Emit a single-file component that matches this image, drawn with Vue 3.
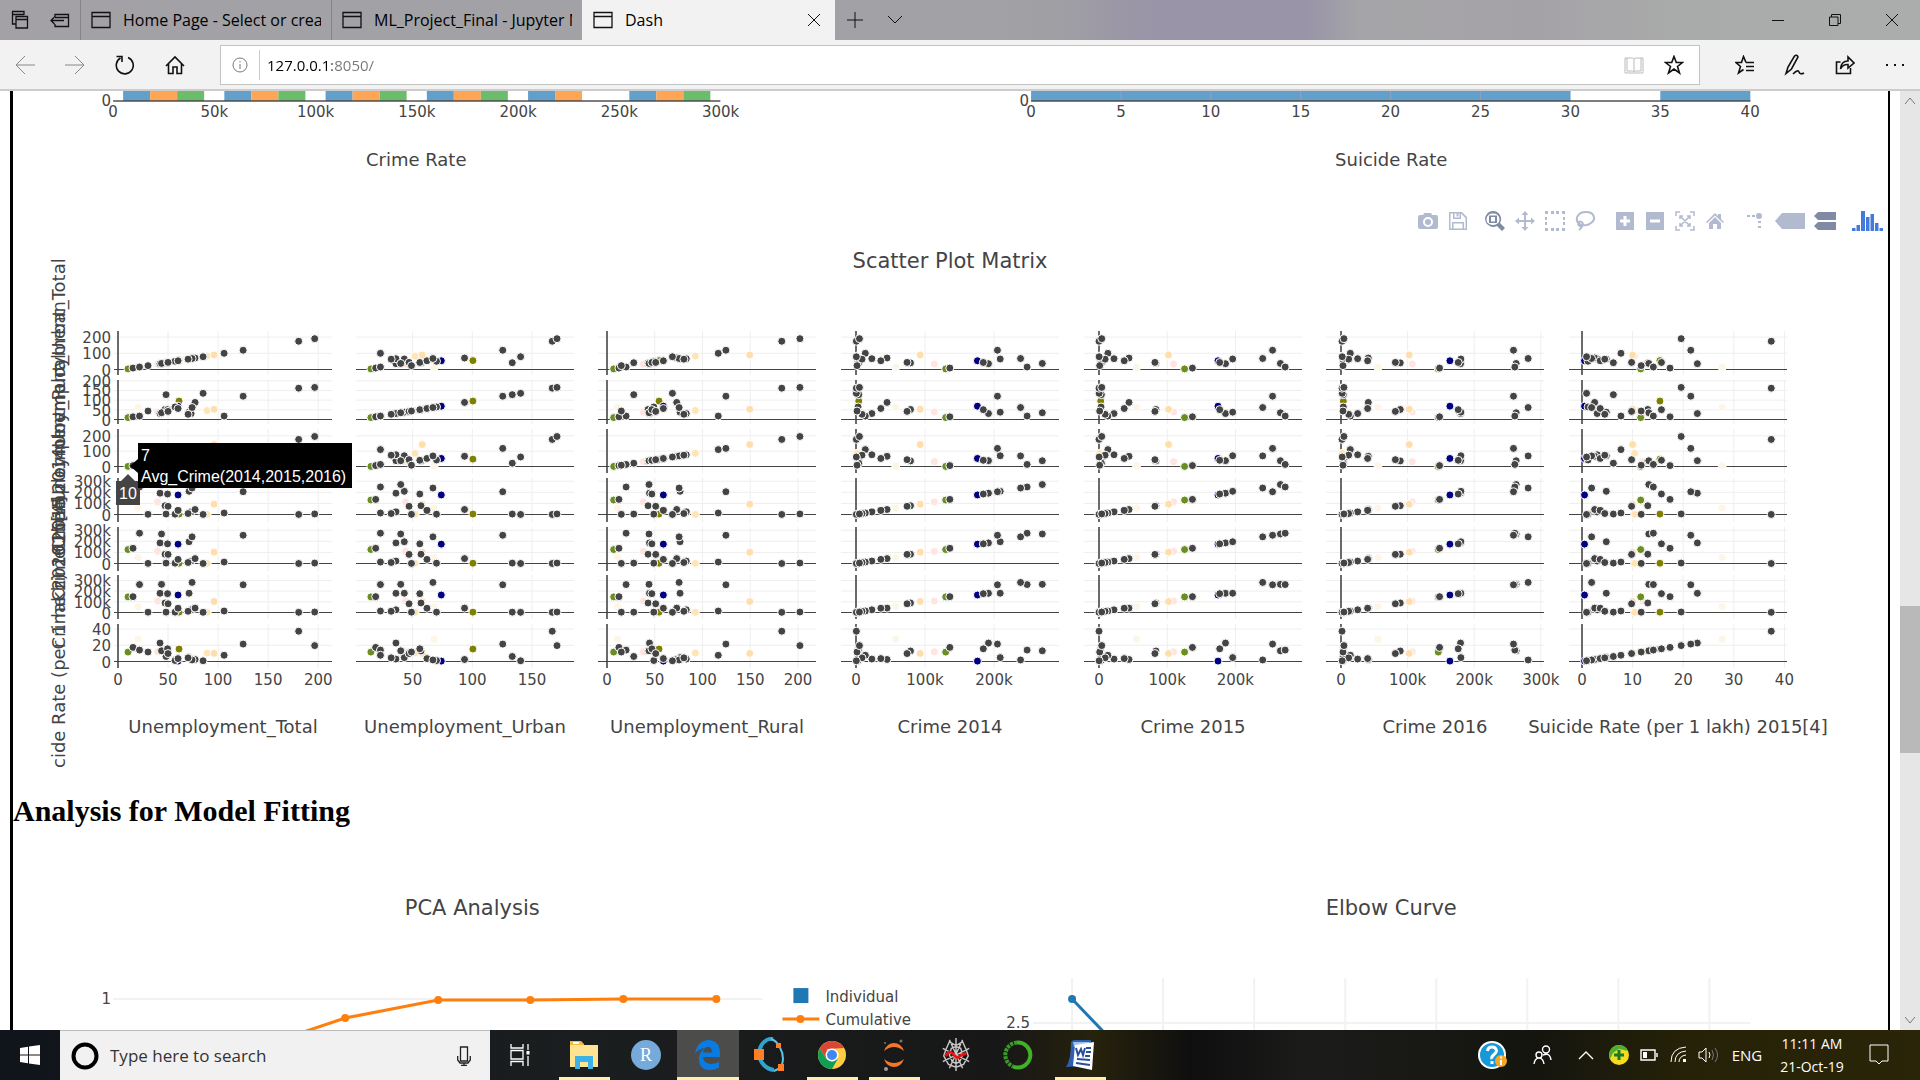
<script setup>
import { ref } from 'vue'

const url = ref('127.0.0.1:8050/')
const query = ref('')

const tabs = [
  { title: 'Home Page - Select or create a notebook', active: false },
  { title: 'ML_Project_Final - Jupyter Notebook', active: false },
  { title: 'Dash', active: true },
]

/* Histogram of the crime rate: one group per 50k */
const crimeTicks = ['0', '50k', '100k', '150k', '200k', '250k', '300k']
const crimeBars = []
for (let g = 0; g < 6; g++) {
  const colours = ['blue', 'orange', 'green']
  colours.forEach((c, k) => {
    if (g === 4 && c === 'green') return
    crimeBars.push({ x: 123 + g * 101.2 + k * 27, c })
  })
}
const suicideTicks = [0, 5, 10, 15, 20, 25, 30, 35, 40]
const suicideBars = [0, 5, 10, 15, 20, 25, 35]
const sx = (v) => 1031 + v * 17.97

/* Scatter plot matrix */
const cols = [
  { name: 'Unemployment_Total', left: 114, zero: 118, k: 1.001, ticks: [0, 50, 100, 150, 200], axis: true },
  { name: 'Unemployment_Urban', left: 356, zero: 353, k: 1.193, ticks: [50, 100, 150], axis: false },
  { name: 'Unemployment_Rural', left: 598, zero: 607, k: 0.955, ticks: [0, 50, 100, 150, 200], axis: true },
  { name: 'Crime 2014', left: 841, zero: 856, k: 0.69, ticks: [0, 100, 200], axis: true, unit: 'k' },
  { name: 'Crime 2015', left: 1084, zero: 1099, k: 0.682, ticks: [0, 100, 200], axis: true, unit: 'k' },
  { name: 'Crime 2016', left: 1326, zero: 1341, k: 0.666, ticks: [0, 100, 200, 300], axis: true, unit: 'k' },
  { name: 'Suicide Rate (per 1 lakh) 2015[4]', left: 1569, zero: 1582, k: 5.06, ticks: [0, 10, 20, 30, 40], axis: true },
]
const rows = [
  { top: 331, zero: 369.5, k: 0.162, ticks: [0, 100, 200], shift: 1 },
  { top: 380, zero: 419.5, k: 0.1935, ticks: [0, 50, 100, 150, 200], shift: 1 },
  { top: 429, zero: 466.5, k: 0.1535, ticks: [0, 100, 200], shift: 1 },
  { top: 478, zero: 514.5, k: 0.111, ticks: [0, 100, 200, 300], shift: 0, unit: 'k' },
  { top: 527, zero: 563.5, k: 0.111, ticks: [0, 100, 200, 300], shift: 0, unit: 'k' },
  { top: 575, zero: 612.5, k: 0.107, ticks: [0, 100, 200, 300], shift: 0, unit: 'k' },
  { top: 624, zero: 661.5, k: 0.81, ticks: [0, 20, 40], shift: 0 },
]
const panelW = 218
const panelH = 44

/* total, urban, rural, crime 14 / 15 / 16 (thousands), suicide rate, colour */
const states = [
  [20, 68, 11, 57.5, 55, 55.5, 27.7, '#fdf5e6'],
  [39.5, 44, 38, 113.5, 109.5, 107, 12, '#ffe4e1'],
  [61, 100.5, 54.5, 4, 2.5, 3.5, 15.4, '#808000'],
  [60, 74, 59, 176, 174.5, 163.5, 0.5, '#000080'],
  [89, 52, 92.5, 1.5, 1, 2, 10.4, '#ffe4b5'],
  [96, 58, 149.5, 93, 102, 102.5, 10, '#ffdead'],
  [10, 15, 7, 130, 125.5, 146, 11.6, '#6b8e23'],
  [57, 70, 49, 3, 3, 3.5, 1.2, '#444'],
  [42, 36, 44.5, 192, 185.5, 179.5, 22.8, '#444'],
  [47, 57, 43, 79, 83.5, 89, 13, '#444'],
  [71, 43, 76.5, 209, 196, 180, 4.8, '#444'],
  [73, 36, 83, 23, 22, 25, 3, '#444'],
  [77, 93.5, 73, 45, 44, 41, 2.5, '#444'],
  [48, 133.5, 28, 4, 3.5, 3.5, 6.2, '#444'],
  [43.5, 40, 44, 270, 266, 263, 13.2, '#444'],
  [15, 19, 12.5, 136, 137, 148, 17.4, '#444'],
  [21.5, 23, 20, 248, 273, 261, 14.1, '#444'],
  [49.5, 56, 47, 184.5, 177, 176, 15.7, '#444'],
  [50, 47, 51, 74, 82, 81.6, 9.8, '#444'],
  [60, 62, 59, 36, 37, 40, 3.6, '#444'],
  [74, 67, 75.5, 238.5, 240, 281, 1.9, '#444'],
  [106, 23, 116.5, 13.5, 13, 14, 7.7, '#444'],
  [70, 32, 80.5, 8.7, 9, 11.5, 4.5, '#444'],
  [85, 140.5, 68.5, 0.5, 0.2, 1.8, 0.9, '#444'],
  [30, 49, 15, 1.5, 1, 3, 11.7, '#444'],
  [125, 125.5, 124.5, 205, 254.5, 259, 21.5, '#444'],
  [180.5, 167, 183, 0.5, 0, 1.5, 37.4, '#444'],
  [196.5, 171, 202, 5, 4, 4.4, 19.6, '#444'],
]
const label = (v, unit) => (v && unit ? v + unit : String(v))

const pca = '252,1049 345,1018 438,1000 530,1000 623,999 716,999'
const pcaPoints = [[345, 1018], [438, 1000], [530, 1000], [623, 999], [716, 999]]
const elbowGrid = [1072, 1163, 1254, 1345, 1436, 1527, 1618, 1709]
</script>

<template>
  <div class="screen">
    <header class="tabstrip">
      <button class="strip-btn" aria-label="Tabs you've set aside">
        <svg class="heavy" width="20" height="20" viewBox="0 0 20 20"><path d="M6 14H2.500V1.500H14V5M2.500 4.500H14" /><path d="M6 6.500H17.500V18H6ZM6 9.500H17.500" /></svg>
      </button>
      <button class="strip-btn" aria-label="Set these tabs aside">
        <svg class="heavy" width="20" height="20" viewBox="0 0 20 20"><path d="M5 7V4.500H18.500V16.500H5V14M5 7.500H18.500M14 10.500H1M4.500 7L1 10.500L4.500 14" /></svg>
      </button>
      <div v-for="t in tabs" :key="t.title" class="tab" :class="{ active: t.active }">
        <svg class="heavy" width="20" height="18" viewBox="0 0 20 18"><path d="M1 1.500H19V16.500H1ZM1 5.500H19" /></svg>
        <span class="tab-title">{{ t.title }}</span>
        <button v-if="t.active" class="tab-close" aria-label="Close tab">
          <svg width="14" height="14" viewBox="0 0 14 14"><path d="M1 1L13 13M13 1L1 13" /></svg>
        </button>
      </div>
      <button class="strip-btn" aria-label="New tab">
        <svg width="16" height="16" viewBox="0 0 16 16"><path d="M8 0V16M0 8H16" /></svg>
      </button>
      <button class="strip-btn" aria-label="Show tab previews">
        <svg width="16" height="10" viewBox="0 0 16 10"><path d="M1 1L8 8L15 1" /></svg>
      </button>
      <div class="window-controls">
        <button aria-label="Minimize"><svg width="12" height="12" viewBox="0 0 12 12"><path d="M0 6.500H12" /></svg></button>
        <button aria-label="Restore"><svg width="12" height="12" viewBox="0 0 12 12"><path d="M.5 3H9V11.500H.5ZM2.500 3V.5H11.500V9.500H9" /></svg></button>
        <button aria-label="Close"><svg width="12" height="12" viewBox="0 0 12 12"><path d="M0 0L12 12M12 0L0 12" /></svg></button>
      </div>
    </header>

    <nav class="addressbar">
      <button class="nav-btn faint" aria-label="Back"><svg width="22" height="20" viewBox="0 0 22 20"><path d="M21 10H2M11 1L2 10L11 19" /></svg></button>
      <button class="nav-btn faint" aria-label="Forward"><svg width="22" height="20" viewBox="0 0 22 20"><path d="M1 10H20M11 1L20 10L11 19" /></svg></button>
      <button class="nav-btn" aria-label="Refresh"><svg width="20" height="20" viewBox="0 0 20 20"><path class="bold" d="M13 2.500A8.500 8.500 0 1 1 5.500 3M1.500 1.500H7V7" /></svg></button>
      <button class="nav-btn" aria-label="Home"><svg width="20" height="20" viewBox="0 0 20 20"><path class="bold" d="M1 11L10 2L19 11M3.500 9V18.500H8V12H12V18.500H16.500V9" /></svg></button>
      <div class="urlbox">
        <button class="info" aria-label="Site information">
          <svg width="16" height="16" viewBox="0 0 16 16"><circle cx="8" cy="8" r="7" /><path d="M8 7V12M8 4V5.500" /></svg>
        </button>
        <input v-model="url" class="url" type="text" aria-label="Address" />
        <button class="url-btn book" aria-label="Reading view"><svg width="20" height="18" viewBox="0 0 20 18"><path d="M1 2H3V15H8.500L10 16L11.500 15H17V2H19V17H1ZM3 2H8.500L10 3L11.500 2H17M10 3V16" /></svg></button>
        <button class="url-btn" aria-label="Add to favorites"><svg width="20" height="20" viewBox="0 0 20 20"><path class="bold" d="M10 1.500L12.300 7.500H18.500L13.500 11.500L15.500 18L10 14L4.500 18L6.500 11.500L1.500 7.500H7.700Z" /></svg></button>
      </div>
      <div class="nav-actions">
        <button class="nav-btn" aria-label="Favorites"><svg width="20" height="20" viewBox="0 0 20 20"><path class="bold" d="M11 7.500L8.500 1.500L6.500 7.500H1L5.500 11.500L3.500 18L8.500 14.500M11 7.500H19M11 11.500H19M11 15.500H19" /></svg></button>
        <button class="nav-btn" aria-label="Notes"><svg width="22" height="22" viewBox="0 0 22 22"><path class="bold" d="M2 19.500L4 13L10.500 2Q13 0 14 3L7.500 15L2 19.500ZM9 20Q14 15 15 18T20 19" /></svg></button>
        <button class="nav-btn" aria-label="Share"><svg width="20" height="20" viewBox="0 0 20 20"><path class="bold" d="M5.500 7H1.500V18.500H15.500V13M5.500 14Q6 6 13 6V2L19 8L13 13V9.500Q8 9 5.500 14Z" /></svg></button>
        <button class="nav-btn" aria-label="Settings and more"><svg width="20" height="4" viewBox="0 0 20 4"><path class="solid" d="M1 1H3V3H1ZM9 1H11V3H9ZM17 1H19V3H17Z" /></svg></button>
      </div>
    </nav>

    <div class="viewport">
      <main class="page">
        <section class="pair top">
          <svg viewBox="13 91 937 115" role="img" aria-label="Crime rate histogram">
            <rect v-for="b in crimeBars" :key="b.x" :x="b.x" y="80" width="27" height="21" :class="b.c" />
            <path class="axis" d="M113 101H720" />
            <text x="111" y="106" text-anchor="end">0</text>
            <text v-for="(t, i) in crimeTicks" :key="t" :x="113 + i * 101.2" y="117" text-anchor="middle">{{ t }}</text>
            <text class="name" x="416" y="166" text-anchor="middle">Crime Rate</text>
          </svg>
          <svg viewBox="951 91 937 115" role="img" aria-label="Suicide rate histogram">
            <rect v-for="b in suicideBars" :key="b" :x="sx(b)" y="80" width="90" height="21" class="blue" />
            <path v-for="b in [5, 10, 15, 20, 25]" :key="b" class="seam" :d="`M${sx(b)} 80V101`" />
            <path class="axis" d="M1031 101H1750" />
            <text x="1029" y="106" text-anchor="end">0</text>
            <text v-for="t in suicideTicks" :key="t" :x="sx(t)" y="117" text-anchor="middle">{{ t }}</text>
            <text class="name" x="1391" y="166" text-anchor="middle">Suicide Rate</text>
          </svg>
        </section>

        <section class="matrix">
          <div class="modebar">
            <div class="group">
              <button aria-label="Download plot as a png"><svg width="20" height="18" viewBox="0 0 20 18"><path fill-rule="evenodd" d="M2 3H5L6 1H13L14 3H18Q20 3 20 5V15Q20 17 18 17H2Q0 17 0 15V5Q0 3 2 3ZM10 5A4.900 4.900 0 1 0 10 15A4.900 4.900 0 1 0 10 5ZM10 7A3 3 0 1 1 10 13A3 3 0 1 1 10 7Z" /></svg></button>
              <button aria-label="Save and edit plot"><svg width="18" height="18" viewBox="0 0 18 18"><path fill-rule="evenodd" d="M0 0H13L18 5V18H0ZM1.500 1.500V16.500H3V10H15V16.500H16.500V6L12 1.500V7H4V1.500ZM5.500 1.500V5.500H10.500V1.500ZM7.500 1.500H9.500V4.500H7.500ZM4.500 11.500V16.500H13.500V11.500Z" /></svg></button>
            </div>
            <div class="group">
              <button class="on" aria-label="Zoom"><svg width="20" height="20" viewBox="0 0 20 20"><path fill-rule="evenodd" d="M8 0A8 8 0 1 0 12 15L17 20L20 17L15 12A8 8 0 0 0 8 0ZM8 2.500A5.800 5.800 0 1 1 8 14A5.800 5.800 0 1 1 8 2.500ZM4 4.500H12V12H4ZM6 6V10.500H10V6Z" /></svg></button>
              <button aria-label="Pan"><svg width="20" height="20" viewBox="0 0 20 20"><path d="M10 0L13.500 4H11V9H16V6.500L20 10L16 13.500V11H11V16H13.500L10 20L6.500 16H9V11H4V13.500L0 10L4 6.500V9H9V4H6.500Z" /></svg></button>
              <button aria-label="Box select"><svg width="20" height="20" viewBox="0 0 20 20"><path d="M0 0H3V3H0ZM6 0H9V3H6ZM11 0H14V3H11ZM17 0H20V3H17ZM0 6H2V9H0ZM18 6H20V9H18ZM0 11H2V14H0ZM18 11H20V14H18ZM0 17H3V20H0ZM6 17H9V20H6ZM11 17H14V20H11ZM17 17H20V20H17Z" /></svg></button>
              <button aria-label="Lasso select"><svg width="20" height="20" viewBox="0 0 20 20"><path class="stroke" d="M5 13.500C-1 9 2 1 11 1C20 1 21 9 16 12C13 14.500 8 15 5 13.500M3 12.500A2.500 2.500 0 1 1 7.500 14.500Q7 17 4 19M3 12.500Q3.500 15.500 7 15" /></svg></button>
            </div>
            <div class="group">
              <button aria-label="Zoom in"><svg width="18" height="18" viewBox="0 0 18 18"><path fill-rule="evenodd" d="M0 0H18V18H0ZM7.500 4V7.500H4V10.500H7.500V14H10.500V10.500H14V7.500H10.500V4Z" /></svg></button>
              <button aria-label="Zoom out"><svg width="18" height="18" viewBox="0 0 18 18"><path fill-rule="evenodd" d="M0 0H18V18H0ZM4 7.500V10.500H14V7.500Z" /></svg></button>
              <button aria-label="Autoscale"><svg class="thin" width="20" height="20" viewBox="0 0 20 20"><path class="stroke" d="M5 1H1V5M15 1H19V5M1 15V19H5M19 15V19H15M6 6L14 14M14 6L6 14M5 8V5H8M12 5H15V8M5 12V15H8M12 15H15V12" /></svg></button>
              <button aria-label="Reset axes"><svg width="18" height="16" viewBox="0 0 18 16"><path d="M9 0L12 3V1H15V6L18 9L17 10L9 2.500L1 10L0 9ZM9 4L15 10V16H11V11H7V16H3V10Z" /></svg></button>
            </div>
            <div class="group">
              <button aria-label="Toggle spike lines"><svg width="16" height="18" viewBox="0 0 16 18"><path d="M0 3H3V5H0ZM5 3H8V5H5ZM12 1A3 3 0 1 0 12 7A3 3 0 1 0 12 1ZM11 9H14V11H11ZM11 14H14V16H11Z" /></svg></button>
              <button class="wide" aria-label="Show closest data on hover"><svg width="30" height="16" viewBox="0 0 30 16"><path d="M0 8L7 0H30V16H7Z" /></svg></button>
              <button class="on" aria-label="Compare data on hover"><svg width="22" height="18" viewBox="0 0 22 18"><path d="M0 4L4 0H22V8H4ZM0 14L4 10H22V18H4Z" /></svg></button>
            </div>
            <a class="plotly" href="#" aria-label="Produced with Plotly"><svg width="32" height="20" viewBox="0 0 32 20"><path d="M0 17H3.500V20H0ZM4.500 14H8V20H4.500ZM9 0H13V20H9ZM14 6H17.500V20H14ZM18.500 3H22V20H18.500ZM23 12H26.500V20H23ZM27.500 17H31V20H27.500Z" /></svg></a>
          </div>
          <svg viewBox="13 236 1875 532" role="img" aria-label="Scatter plot matrix">
            <text class="title" x="950" y="268" text-anchor="middle">Scatter Plot Matrix</text>
            <g v-for="(c, i) in cols" :key="c.name">
              <g v-for="(r, j) in rows" :key="j">
                <path v-for="t in c.ticks" :key="'x' + t" class="grid" :d="`M${c.zero + t * c.k} ${r.top}v${panelH}`" />
                <path v-for="t in r.ticks" :key="'y' + t" class="grid" :d="`M${c.left} ${r.zero - t * r.k}h${panelW}`" />
                <path v-if="c.axis" class="zero-x" :d="`M${c.zero} ${r.top}v${panelH}`" />
                <path class="zero-y" :d="`M${c.left} ${r.zero}h${panelW}`" />
              </g>
              <text v-for="t in c.ticks" :key="t" :x="c.zero + t * c.k" y="685" text-anchor="middle">{{ label(t, c.unit) }}</text>
              <text class="name" :x="c.left + 109" y="733" text-anchor="middle">{{ c.name }}</text>
              <text class="name" :transform="`translate(65 ${rows[i].top + 22}) rotate(-90)`" text-anchor="middle">{{ c.name }}</text>
            </g>
            <g v-for="(r, j) in rows" :key="'l' + j">
              <text v-for="t in r.ticks" :key="t" x="111" :y="r.zero - t * r.k + 6" text-anchor="end">{{ label(t, r.unit) }}</text>
            </g>
            <g v-for="(c, i) in cols" :key="'p' + i">
              <g v-for="(r, j) in rows" :key="j">
                <circle v-for="(s, n) in states" :key="n" class="dot" r="4" :cx="c.zero + s[i] * c.k" :cy="r.zero - s[j] * r.k + r.shift" :fill="s[7]" />
              </g>
            </g>
            <path class="tip-x" d="M128 474L135 481H140V505H116V481H121Z" />
            <text class="tip" x="128" y="499" text-anchor="middle">10</text>
            <path class="tip-box" d="M130 466L138 459V443H352V488H138V473Z" />
            <text class="tip" x="141" y="461">7</text>
            <text class="tip" x="141" y="482">Avg_Crime(2014,2015,2016)</text>
          </svg>
        </section>

        <h2>Analysis for Model Fitting</h2>

        <section class="pair">
          <svg viewBox="13 852 937 198" role="img" aria-label="PCA analysis">
            <text class="title" x="472" y="915" text-anchor="middle">PCA Analysis</text>
            <path class="grid" d="M113 999H762" />
            <text x="111" y="1004" text-anchor="end">1</text>
            <polyline class="line cumulative" :points="pca" />
            <circle v-for="p in pcaPoints" :key="p[0]" :cx="p[0]" :cy="p[1]" r="4" fill="#ff7f0e" />
            <rect x="793" y="988" width="15" height="15" fill="#1f77b4" />
            <text x="825" y="1002">Individual</text>
            <path class="line cumulative" d="M782 1019H819" />
            <circle cx="800" cy="1019" r="4" fill="#ff7f0e" />
            <text x="825" y="1025">Cumulative</text>
          </svg>
          <svg viewBox="951 852 937 198" role="img" aria-label="Elbow curve">
            <text class="title" x="1391" y="915" text-anchor="middle">Elbow Curve</text>
            <path v-for="x in elbowGrid" :key="x" class="grid" :d="`M${x} 978V1050`" />
            <path class="grid" d="M1033 1023H1750" />
            <text x="1030" y="1028" text-anchor="end">2.5</text>
            <path class="line inertia" d="M1072 999L1121 1050" />
            <circle cx="1072" cy="999" r="4" fill="#1f77b4" />
          </svg>
        </section>
      </main>
      <div class="scrollbar">
        <button aria-label="Scroll up"><svg width="10" height="8" viewBox="0 0 10 8"><path d="M0 7L5 1L10 7" /></svg></button>
        <div class="track"><div class="before"></div><div class="thumb"></div><div class="after"></div></div>
        <button aria-label="Scroll down"><svg width="10" height="8" viewBox="0 0 10 8"><path d="M0 1L5 7L10 1" /></svg></button>
      </div>
    </div>

    <footer class="taskbar">
      <button class="start" aria-label="Start"><svg width="20" height="20" viewBox="0 0 20 20"><path fill="#fff" d="M0 3L8 1.800V9.500H0ZM9 1.600L20 0V9.500H9ZM0 10.500H8V18.200L0 17ZM9 10.500H20V20L9 18.400Z" /></svg></button>
      <div class="search">
        <svg width="28" height="28" viewBox="0 0 28 28"><circle cx="14" cy="14" r="11.500" fill="none" stroke="#000" stroke-width="4" /></svg>
        <input v-model="query" type="text" placeholder="Type here to search" aria-label="Type here to search" />
        <button aria-label="Speak"><svg width="14" height="20" viewBox="0 0 14 20"><path fill="none" stroke="#222" stroke-width="1.300" d="M3.500 1H10.500V15H3.500ZM.7 10V14L3 17H11L13.300 14V10M7 17V19M4 19.300H10" /></svg></button>
      </div>
      <div class="apps">
        <button aria-label="Task View"><svg width="20" height="24" viewBox="0 0 20 24"><path fill="none" stroke="#fff" stroke-width="1.300" d="M1 1V5H13V1M1 23V18.500H13V23M1 7.500H13V16H1ZM18 1V7M18 13V23" /><path fill="#fff" d="M16.500 8H19.500V11.500H16.500Z" /></svg></button>
        <button class="open" aria-label="File Explorer"><svg width="28" height="28" viewBox="0 0 28 28"><path fill="#f4bb3a" d="M0 0H11L14 3V7H0Z" /><path fill="#fff" d="M3 1H9V3H3Z" /><path fill="#ffe391" d="M0 4H28V26H0Z" /><path fill="#3db2e8" d="M5 15H23V28H18V21H10V28H5Z" /></svg></button>
        <button aria-label="R"><svg width="30" height="36" viewBox="0 0 30 36"><circle cx="15" cy="18" r="15" fill="#75aadb" /><text x="15" y="24" text-anchor="middle" font-size="18" fill="#fff" font-family="Liberation Serif, serif">R</text></svg></button>
        <button class="open current" aria-label="Microsoft Edge"><svg width="26" height="30" viewBox="0 0 26 30"><path fill="#0a7be0" d="M0 14Q2 1 13 0Q25 0 25 14V17H8Q9 24 16 24Q20 24 24 22V27.500Q20 30 15 30Q4 30 4 19Q4 12 10 8Q3 9 0 14ZM8 12.500H17Q17 7 13 7Q9 7 8 12.500Z" /></svg></button>
        <button aria-label="Octave"><svg width="32" height="36" viewBox="0 0 32 36"><path fill="none" stroke="#2fa4cf" stroke-width="4" d="M20 33C11 32 5 24 5 16C6 6 13 1 19 2" /><path fill="none" stroke="#5fc4e4" stroke-width="2" d="M17 2C24 4 29 14 29 22Q29 31 20 34" /><path fill="#ff7f27" d="M0 12H10V23H0ZM22 6H27V11H22ZM24 27H30V34H24Z" /></svg></button>
        <button class="open" aria-label="Google Chrome"><svg width="28" height="28" viewBox="0 0 28 28"><circle cx="14" cy="14" r="14" fill="#fc4" /><path fill="#0f9d58" d="M1.900 7A14 14 0 0 0 14 28L20 17.500L14 20.500L8 17.500Z" /><path fill="#db4437" d="M1.900 7L8 17.500L9 8L26.100 7A14 14 0 0 0 1.900 7Z" /><circle cx="14" cy="14" r="6.500" fill="#fff" /><circle cx="14" cy="14" r="5" fill="#4285f4" /></svg></button>
        <button class="open" aria-label="Jupyter"><svg width="24" height="32" viewBox="0 0 24 32"><path fill="#f37726" d="M2 12Q5 4 12 4T22 12Q12 4 2 12ZM2 20Q5 28 12 28T22 20Q12 28 2 20Z" /><circle cx="4" cy="30" r="2" fill="#9e9e9e" /><circle cx="19" cy="2" r="1.500" fill="#767677" /><circle cx="3" cy="4" r="1" fill="#767677" /></svg></button>
        <button aria-label="Spyder"><svg width="30" height="34" viewBox="0 0 30 36"><path fill="none" stroke="#c8c8c8" stroke-width="1.500" d="M8 4L15 8L22 4L26 13L28 19L23 28L15 31L7 28L2 19L4 13ZM10 11L15 9L20 11L22 18L19 25L15 27L11 25L8 18ZM15 0V35M1 11L29 25M29 11L1 25M8 2L22 32M22 2L8 32" /><path fill="none" stroke="#e11" stroke-width="3" d="M4 19Q8 12 12 17T18 20T26 16" /></svg></button>
        <button aria-label="Anaconda"><svg width="30" height="30" viewBox="0 0 30 30"><path fill="none" stroke="#43b02a" stroke-width="4" d="M14 2.500A12.500 12.500 0 1 1 10 26.500" /><path fill="none" stroke="#3a9a2a" stroke-width="4" stroke-dasharray="3 1" d="M14 2.500A12.500 12.500 0 0 0 10 26.500" /></svg></button>
        <button class="open" aria-label="Microsoft Word"><svg width="28" height="30" viewBox="0 0 28 30"><path fill="#2d5fb0" d="M5 2Q6 0 9 0H25V6L20 26L0 27Q5 20 5 2Z" /><path fill="#9fc3ee" d="M7 2H23V5L8 7Z" /><path fill="#fff" d="M9 5L28 2L26 30L7 26Z" /><path fill="none" stroke="#2a4f9c" stroke-width="2" d="M10 8L12 15L15 9L17 15L19 8M20 8H25M20 12H25M19 16H24M11 19L24 20M10 23L24 25" /></svg></button>
      </div>
      <div class="tray">
        <button class="w50" aria-label="Help"><svg width="30" height="28" viewBox="0 0 30 28"><circle cx="14" cy="14" r="14" fill="#fff" /><circle cx="14" cy="14" r="12" fill="#1798d8" /><path fill="none" stroke="#fff" stroke-width="3" d="M9.500 10Q10 6 14 6T18.500 10Q18 12 15.500 14T14 18M14 20V23" /><circle cx="23" cy="20" r="6" fill="#f5a623" /><path stroke="#fff" stroke-width="2" d="M23 19V24M23 15.500V17.500" /></svg></button>
        <button class="w50" aria-label="People"><svg width="20" height="20" viewBox="0 0 20 20"><path class="w strong" d="M13 1A3.500 3.500 0 1 1 13 8A3.500 3.500 0 1 1 13 1ZM6 7A3 3 0 1 1 6 13A3 3 0 1 1 6 7ZM1 19Q2 13 6 13T11 19M10 10Q17 7 18 15" /></svg></button>
        <button class="w36" aria-label="Show hidden icons"><svg width="16" height="10" viewBox="0 0 16 10"><path class="w strong" d="M1 9L8 2L15 9" /></svg></button>
        <button class="w30" aria-label="Antivirus"><svg width="20" height="20" viewBox="0 0 20 20"><circle cx="10" cy="10" r="10" fill="#f5dc1c" /><path fill="#4fae32" d="M10 0A10 10 0 0 1 19 6L10 4L4 8L1 14A10 10 0 0 1 10 0Z" /><path stroke="#157a2c" stroke-width="3" d="M10 5V15M5 10H15" /></svg></button>
        <button class="w30" aria-label="Battery"><svg width="18" height="12" viewBox="0 0 18 12"><path class="w strong" d="M1 1H15V11H1ZM17 4V8" /><path fill="#fff" d="M3 3H7V9H3Z" /></svg></button>
        <button class="w30" aria-label="Network"><svg width="18" height="18" viewBox="0 0 18 18"><path class="w" d="M1 16Q1 2 16 1M5 16Q5 6 16 5M9 16Q9 10 16 9" /><path fill="#fff" d="M13 13H16V16H13Z" /></svg></button>
        <button class="w30" aria-label="Volume"><svg width="22" height="16" viewBox="0 0 22 16"><path class="w" d="M1 5H4L8 1V15L4 11H1ZM11 5Q13 8 11 11" /><path class="w dim" d="M14 3Q17 8 14 13M17 1Q22 8 17 15" /></svg></button>
        <button class="lang">ENG</button>
        <button class="clock"><span>11:11 AM</span><span>21-Oct-19</span></button>
        <button class="notice" aria-label="Notifications"><svg width="20" height="22" viewBox="0 0 20 22"><path class="w" d="M1 1H19V17H13L10 20L7 17H1Z" /></svg></button>
      </div>
    </footer>
  </div>
</template>

<style>
html,
body {
  margin: 0;
  background: #fff;
}
</style>

<style scoped>
.screen {
  display: flex;
  flex-direction: column;
  height: 100vh;
  overflow: hidden;
  font-family: "Open Sans", sans-serif;
  color: #000;
}
button {
  display: flex;
  align-items: center;
  justify-content: center;
  margin: 0;
  padding: 0;
  border: 0;
  background: none;
  color: inherit;
  font: inherit;
}
svg {
  display: block;
  flex: none;
}

/* tab strip */
.tabstrip {
  display: flex;
  flex: none;
  height: 40px;
  background: linear-gradient(to right, #a3a1a6 0%, #a2a1a6 52%, #a09fa4 55%, #9994a7 60%, #9994a7 68%, #a5a5a8 71%, #a5a2a7 80%, #a9aaaa 87%, #abadac 100%);
}
.tabstrip svg path {
  fill: none;
  stroke: #111;
}
.tabstrip .heavy path {
  stroke-width: 1.3;
}
.strip-btn {
  width: 40px;
}
.tab {
  display: flex;
  align-items: center;
  gap: 12px;
  box-sizing: border-box;
  width: 251px;
  padding: 0 10px;
  border-left: 1px solid #85838a;
  font-size: 16px;
  white-space: nowrap;
}
.tab.active {
  width: 253px;
  border-color: #f2f2f2;
  background: #f2f2f2;
}
.tab-title {
  flex: 1;
  overflow: hidden;
}
.tab-close {
  width: 22px;
}
.window-controls {
  display: flex;
  margin-left: auto;
}
.window-controls button {
  width: 57px;
}

/* address bar */
.addressbar {
  display: flex;
  align-items: center;
  flex: none;
  box-sizing: border-box;
  height: 51px;
  border-bottom: 2px solid #ccc;
  background: #f2f2f2;
}
.addressbar svg path,
.addressbar svg circle {
  fill: none;
  stroke: #111;
  stroke-width: 1;
}
.addressbar svg path.bold {
  stroke-width: 1.6;
}
.addressbar svg path.solid {
  fill: #111;
  stroke: none;
}
.nav-btn {
  width: 50px;
  height: 40px;
}
.addressbar .faint svg path {
  stroke: #888;
}
.urlbox {
  display: flex;
  align-items: center;
  flex: 1;
  box-sizing: border-box;
  height: 40px;
  margin-left: 20px;
  border: 1px solid #c4c4c4;
  background: #fff;
}
.info {
  width: 39px;
  height: 30px;
  border-right: 1px solid #ccc;
}
.addressbar .info svg path,
.addressbar .info svg circle {
  stroke: #777;
}
.url {
  flex: 1;
  min-width: 0;
  padding: 0 0 0 7px;
  border: 0;
  outline: 0;
  background: linear-gradient(to right, #000 72px, #777 72px);
  -webkit-background-clip: text;
  background-clip: text;
  -webkit-text-fill-color: transparent;
  font: 15px "Open Sans", sans-serif;
}
.url-btn {
  width: 40px;
}
.url-btn:last-child {
  margin-right: 5px;
}
.addressbar .book svg path {
  stroke: #bbb;
}
.nav-actions {
  display: flex;
  margin-left: 20px;
}

/* web page */
.viewport {
  display: flex;
  flex: 1;
  min-height: 0;
}
.page {
  flex: 1;
  min-width: 0;
  margin: 0 10px;
  overflow: hidden;
  border-left: 3px solid #000;
  border-right: 2px solid #000;
}
.page text {
  font-family: "DejaVu Sans", sans-serif;
  font-size: 15px;
  fill: #444;
}
.page text.name {
  font-size: 18px;
}
.page text.title {
  font-size: 21px;
}
.page text.tip {
  font-family: "Liberation Sans", sans-serif;
  font-size: 16px;
  fill: #fff;
}
.pair {
  display: grid;
  grid-template-columns: 1fr 1fr;
}
.pair svg,
.matrix > svg {
  width: 100%;
  height: auto;
}
.blue {
  fill: #62a0cb;
}
.orange {
  fill: #ffa556;
}
.green {
  fill: #6bbc6b;
}
.axis {
  stroke: #444;
  stroke-opacity: 0.7;
  stroke-width: 2px;
}
.seam {
  stroke: #8f9fbe;
}
.grid {
  stroke: #eee;
  stroke-width: 1px;
}
.pair .grid {
  stroke-width: 2px;
  stroke: #f2f2f2;
}
.zero-x {
  stroke: #6a6a6a;
  stroke-width: 2px;
}
.zero-y {
  stroke: #444;
}
.dot {
  stroke: #fff;
}
.line {
  fill: none;
  stroke-width: 3px;
}
.cumulative {
  stroke: #ff7f0e;
}
.inertia {
  stroke: #1f77b4;
}
.tip-box {
  fill: #000;
}
.tip-x {
  fill: #444;
}

/* plot toolbar */
.modebar {
  display: flex;
  justify-content: flex-end;
  gap: 10px;
  height: 30px;
  padding-right: 2px;
}
.group {
  display: flex;
}
.group:first-child {
  margin-right: -3px;
}
.group button {
  width: 30px;
}
.group button.wide {
  width: 40px;
}
.modebar path {
  fill: #b2bacf;
}
.modebar .on path {
  fill: #808aa5;
}
.modebar path.stroke {
  fill: none;
  stroke: #b2bacf;
  stroke-width: 2px;
}
.modebar .thin path.stroke {
  stroke-width: 1.5;
}
.plotly {
  display: flex;
  align-items: center;
  justify-content: center;
  width: 36px;
}
.modebar .plotly path {
  fill: #447adb;
}
h2 {
  margin: 26px 0 24px;
  font: bold 30px/34px "Liberation Serif", serif;
}

/* scrollbar */
.scrollbar {
  display: flex;
  flex-direction: column;
  flex: none;
  width: 20px;
  background: #e6e6e6;
}
.scrollbar button {
  height: 20px;
}
.scrollbar path {
  fill: none;
  stroke: #777;
}
.track {
  display: flex;
  flex-direction: column;
  flex: 1;
}
.before {
  flex: 495;
}
.thumb {
  flex: 147;
  background: #b9b9b9;
}
.after {
  flex: 257;
}

/* taskbar */
.taskbar {
  display: flex;
  flex: none;
  height: 50px;
  background: linear-gradient(to right, #10151b 0%, #1b1e1f 30%, #171717 52%, #26220c 57%, #0f0f0f 62%, #1b1b1a 68%, #15150f 80%, #262207 88%, #2a2508 100%);
  color: #fff;
}
.start {
  width: 60px;
}
.search {
  display: flex;
  align-items: center;
  box-sizing: border-box;
  width: 430px;
  padding-left: 11px;
  border-top: 1px solid #bbb;
  background: #f1f1f1;
}
.search input {
  flex: 1;
  min-width: 0;
  padding: 0 0 0 11px;
  border: 0;
  outline: 0;
  background: none;
  font: 17px "Open Sans", sans-serif;
}
.search input::placeholder {
  color: #333;
  opacity: 1;
}
.search button {
  width: 52px;
}
.apps {
  display: flex;
}
.apps button {
  width: 62px;
  background: no-repeat center bottom / 51px 3px;
}
.apps button:first-child {
  width: 63px;
  padding-right: 3px;
}
.apps .open {
  background-image: linear-gradient(#fdf0a8, #fdf0a8);
}
.apps .current {
  background-color: #4c4c4b;
  background-size: 100% 3px;
}
.tray {
  display: flex;
  margin-left: auto;
}
.w {
  fill: none;
  stroke: #fff;
  stroke-width: 1;
}
.strong {
  stroke-width: 1.4;
}
.dim {
  stroke: #777;
}
.w30 {
  width: 30px;
}
.w36 {
  width: 36px;
}
.w50 {
  width: 50px;
}
.lang {
  width: 46px;
  font-size: 15px;
}
.clock {
  flex-direction: column;
  width: 84px;
  font-size: 14px;
  line-height: 23px;
}
.notice {
  width: 50px;
  margin-right: 16px;
}
</style>
